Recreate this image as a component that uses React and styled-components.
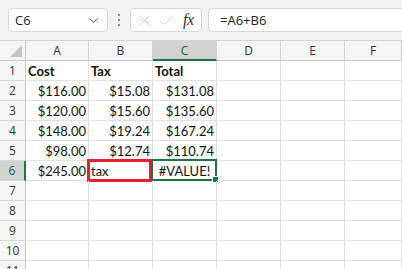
import styled, { createGlobalStyle } from 'styled-components';
import { ChevronDown, X, Check } from 'lucide-react';

const GlobalStyle = createGlobalStyle`
  body {
    margin: 0;
    background: #ffffff;
    font-family: 'Open Sans', 'Liberation Sans', sans-serif;
  }
`;

const columns = ['A', 'B', 'C', 'D', 'E', 'F'];

const rows = [
  [{ v: 'Cost', bold: true }, { v: 'Tax', bold: true }, { v: 'Total', bold: true }],
  [{ v: '$116.00', num: true }, { v: '$15.08', num: true }, { v: '$131.08', num: true }],
  [{ v: '$120.00', num: true }, { v: '$15.60', num: true }, { v: '$135.60', num: true }],
  [{ v: '$148.00', num: true }, { v: '$19.24', num: true }, { v: '$167.24', num: true }],
  [{ v: '$98.00', num: true }, { v: '$12.74', num: true }, { v: '$110.74', num: true }],
  [{ v: '$245.00', num: true }, { v: 'tax', marked: true }, { v: '#VALUE!', error: true, active: true }],
  [], [], [], [], [],
];

const Shell = styled.div`
  width: 402px;
  height: 269px;
  overflow: hidden;
  background: #ffffff;
`;

const Toolbar = styled.div`
  height: 40px;
  background: #f3f3f3;
  display: flex;
  align-items: flex-start;
  padding: 8px 0 0 8px;
  box-sizing: border-box;
`;

const Box = styled.div`
  height: 24px;
  box-sizing: border-box;
  background: #ffffff;
  border: 1px solid #d6d6d6;
  border-radius: 4px;
  display: flex;
  align-items: center;
`;

const NameBox = styled(Box)`
  width: 100px;
  padding: 0 6px 0 6px;
  justify-content: space-between;
  font-size: 13px;
  color: #222;
`;

const Grip = styled.div`
  width: 22px;
  height: 24px;
  display: flex;
  align-items: center;
  justify-content: center;
`;

const FxBox = styled(Box)`
  width: 72px;
  padding: 0 4px 0 4px;
  gap: 3px;
  color: #c4c4c4;
`;

const Fx = styled.span`
  font-family: 'Liberation Serif', 'DejaVu Serif', serif;
  font-style: italic;
  font-size: 16px;
  color: #333;
  margin-left: 4px;
  letter-spacing: -0.5px;
`;

const FormulaBox = styled(Box)`
  flex: 1;
  margin-left: 6px;
  border-right: none;
  border-radius: 4px 0 0 4px;
  padding-left: 11px;
  font-size: 13px;
  color: #222;
`;

const Sheet = styled.div`
  display: grid;
  grid-template-columns: 26px 63px 64px 64px 64px 64px 1fr;
  grid-auto-rows: 20px;
  border-top: 1px solid #d4d4d4;
  font-family: 'Lato', 'Liberation Sans', sans-serif;
`;

const Corner = styled.div`
  position: relative;
  background: #f5f5f5;
  border-right: 1px solid #c8c8c8;
  border-bottom: 1px solid #c8c8c8;
  &::after {
    content: '';
    position: absolute;
    right: 3px;
    bottom: 3px;
    border-left: 12px solid transparent;
    border-bottom: 12px solid #c3c3c3;
  }
`;

const ColHead = styled.div`
  background: ${(p) => (p.$active ? '#d2d2d2' : '#f5f5f5')};
  border-right: 1px solid #d0d0d0;
  border-bottom: ${(p) => (p.$active ? '2px solid #217346' : '1px solid #c8c8c8')};
  display: flex;
  align-items: center;
  justify-content: center;
  font-family: 'Open Sans', 'Liberation Sans', sans-serif;
  font-size: 12px;
  color: ${(p) => (p.$active ? '#1b5e3a' : '#333')};
  box-sizing: border-box;
`;

const RowHead = styled.div`
  background: ${(p) => (p.$active ? '#d2d2d2' : '#f5f5f5')};
  border-right: ${(p) => (p.$active ? '2px solid #217346' : '1px solid #c8c8c8')};
  border-bottom: 1px solid #d8d8d8;
  display: flex;
  align-items: center;
  justify-content: center;
  font-family: 'Open Sans', 'Liberation Sans', sans-serif;
  font-size: 12px;
  color: ${(p) => (p.$active ? '#1b5e3a' : '#333')};
  box-sizing: border-box;
`;

const Cell = styled.div`
  position: relative;
  border-right: 1px solid #e1e1e1;
  border-bottom: 1px solid #e1e1e1;
  display: flex;
  align-items: center;
  justify-content: ${(p) => (p.$align === 'right' ? 'flex-end' : p.$align === 'center' ? 'center' : 'flex-start')};
  padding: 0 2px 0 2px;
  font-size: 13px;
  font-weight: ${(p) => (p.$bold ? 700 : 400)};
  color: #111;
  white-space: nowrap;
`;

const Marker = styled.div`
  position: absolute;
  left: -2px;
  top: -2px;
  right: 0px;
  bottom: -2px;
  border: 3px solid #e8202a;
  pointer-events: none;
`;

const Selection = styled.div`
  position: absolute;
  left: -2px;
  top: -2px;
  right: -1px;
  bottom: -1px;
  border: 2px solid #217346;
  pointer-events: none;
  &::after {
    content: '';
    position: absolute;
    right: -4px;
    bottom: -4px;
    width: 5px;
    height: 5px;
    background: #217346;
    border: 1px solid #ffffff;
  }
`;

const App = () => {
  return (
    <Shell>
      <GlobalStyle />
      <Toolbar>
        <NameBox>
          <span>C6</span>
          <ChevronDown size={15} strokeWidth={1.5} color='#444' />
        </NameBox>
        <Grip>
          <svg width='4' height='14' viewBox='0 0 4 14'>
            <circle cx='2' cy='2' r='1.2' fill='#888' />
            <circle cx='2' cy='7' r='1.2' fill='#888' />
            <circle cx='2' cy='12' r='1.2' fill='#888' />
          </svg>
        </Grip>
        <FxBox>
          <X size={19} strokeWidth={1} />
          <Check size={19} strokeWidth={1} />
          <Fx>fx</Fx>
        </FxBox>
        <FormulaBox>=A6+B6</FormulaBox>
      </Toolbar>
      <Sheet>
        <Corner />
        {columns.map((c) => (
          <ColHead key={c} $active={c === 'C'}>
            {c}
          </ColHead>
        ))}
        {rows.map((row, r) => (
          <>
            <RowHead key={`h-${r}`} $active={r === 5}>
              {r + 1}
            </RowHead>
            {columns.map((c, i) => {
              const cell = row[i];
              const align = cell?.num ? 'right' : cell?.error ? 'center' : 'left';
              return (
                <Cell key={`${c}-${r}`} $align={align} $bold={cell?.bold}>
                  {cell?.v}
                  {cell?.marked && <Marker />}
                  {cell?.active && <Selection />}
                </Cell>
              );
            })}
          </>
        ))}
      </Sheet>
    </Shell>
  );
};

export default App;
